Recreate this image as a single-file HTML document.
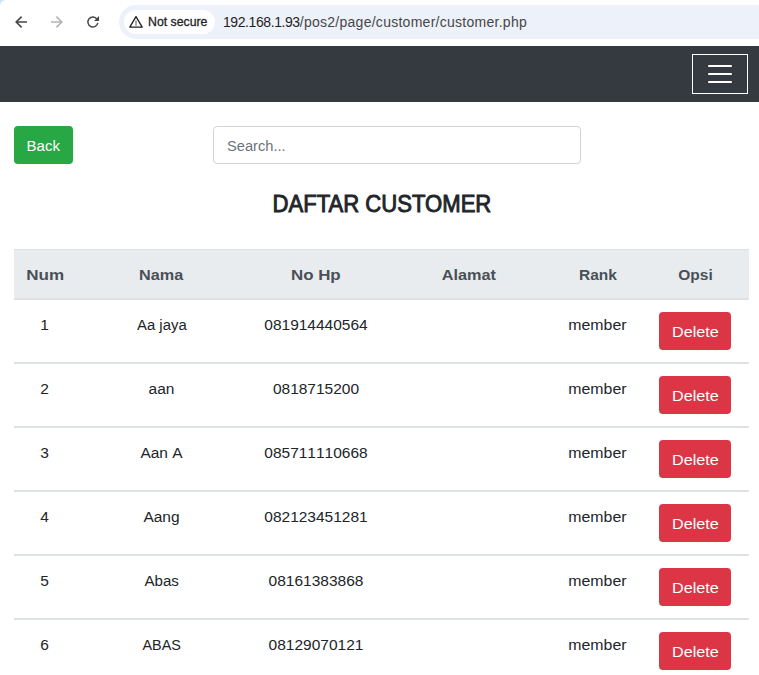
<!DOCTYPE html>
<html lang="id">
<head>
<meta charset="utf-8">
<title>Daftar Customer</title>
<style>
*{box-sizing:border-box;margin:0;padding:0}
html,body{width:759px;height:675px;overflow:hidden;background:#fff}
body{font-family:"Liberation Sans",Arial,sans-serif;color:#212529;font-size:16px;position:relative}
.abs{position:absolute}
/* browser chrome */
#chrome{left:0;top:0;width:759px;height:46px;background:#fff}
#corner{left:0;top:0;width:5px;height:5px;background:radial-gradient(circle at 5px 5px,#fff 4.2px,#cfe0fc 5.2px)}
#omni{left:119px;top:5px;width:660px;height:34px;border-radius:17px;background:#edf1fa}
#chip{left:124px;top:10px;width:91px;height:24px;border-radius:12px;background:#fff}
#chiptxt{left:148px;top:10px;height:24px;line-height:24px;font-size:12.3px;font-weight:400;-webkit-text-stroke:0.3px #1f1f1f;color:#1f1f1f;white-space:nowrap;letter-spacing:0}
#url{left:223px;top:5px;height:34px;line-height:34px;font-size:14px;color:#1f1f1f;white-space:nowrap}
#url b{font-weight:400;letter-spacing:-0.42px;font-kerning:none}
#url span{color:#474747;letter-spacing:0.27px}
/* navbar */
#nav{left:0;top:46px;width:759px;height:56px;background:#343a40}
#tog{left:692px;top:54px;width:56px;height:40px;border:1px solid #fff;border-radius:0}
#tog i{position:absolute;left:15px;width:24px;height:2px;background:#fff;border-radius:1px}
/* controls */
#back{left:14px;top:126px;width:59px;height:38px;border-radius:4px;background:#28a745;color:#fff;text-align:center;line-height:40px;font-size:15.5px}
#search{left:213px;top:126px;width:368px;height:38px;border:1px solid #ced4da;border-radius:4px;background:#fff;color:#6c757d;line-height:38px;padding-left:13px;font-size:15.5px}
#h{left:0;top:187px;width:763px;text-align:center;font-size:23px;font-weight:400;-webkit-text-stroke:0.9px #212529;line-height:34px;color:#212529;white-space:nowrap}
/* table */
table{position:absolute;left:14px;top:249px;width:735px;border-collapse:separate;border-spacing:0;table-layout:fixed}
th,td{text-align:center;vertical-align:top;padding:13px 0 11px;line-height:24px;font-size:15.5px;white-space:nowrap}
td.o{padding:12px 0}
.s{display:inline-block;transform-origin:50% 50%}
td{font-kerning:none}
thead th{background:#e9ecef;color:#495057;font-weight:700;border-top:1px solid #dee2e6;border-bottom:2px solid #dee2e6;height:51px}
tbody td{border-bottom:2px solid #dee2e6;height:64px}
.del{display:inline-block;width:72px;height:38px;line-height:40px;border-radius:4px;background:#dc3545;color:#fff;font-size:15.5px;vertical-align:top}
</style>
</head>
<body>
<div id="chrome" class="abs"></div>
<div id="corner" class="abs"></div>
<svg class="abs" style="left:0;top:0" width="110" height="46" viewBox="0 0 110 46" fill="none" stroke-linecap="butt" stroke-linejoin="miter">
  <g stroke="#474747" stroke-width="1.6">
    <path d="M27 22H16.2M21.6 16.6L16.2 22l5.4 5.4"/>
  </g>
  <g stroke="#b4b4b4" stroke-width="1.6">
    <path d="M51 22h10.8M56.4 16.6l5.4 5.4-5.4 5.4"/>
  </g>
  <g stroke="#474747" stroke-width="1.6">
    <path d="M97.0 19.1A5 5 0 1 0 97.85 22.9" stroke-width="1.45"/>
    <path d="M99 15.9V20.9H94Z" fill="#474747" stroke="none"/>
  </g>
</svg>
<div id="omni" class="abs"></div>
<div id="chip" class="abs"></div>
<svg class="abs" style="left:128px;top:14px" width="16" height="16" viewBox="0 0 16 16" fill="none">
  <path d="M8 2.6L14.2 13.2H1.8Z" stroke="#1f1f1f" stroke-width="1.3" stroke-linejoin="round"/>
  <path d="M8 6.4v5.4" stroke="#6a6a6a" stroke-width="1.1"/>
</svg>
<div id="chiptxt" class="abs">Not secure</div>
<div id="url" class="abs"><b>192.168.1.93</b><span>/pos2/page/customer/customer.php</span></div>

<div id="nav" class="abs"></div>
<div id="tog" class="abs"><i style="top:10px"></i><i style="top:18px"></i><i style="top:26px"></i></div>

<div id="back" class="abs"><span class="s" style="transform:scaleX(0.966)">Back</span></div>
<div id="search" class="abs"><span class="s" style="transform:scaleX(0.946);transform-origin:0 50%">Search...</span></div>
<div id="h" class="abs"><span class="s" style="transform:scaleX(.96)">DAFTAR CUSTOMER</span></div>

<table>
<colgroup><col style="width:61px"><col style="width:173px"><col style="width:136px"><col style="width:170px"><col style="width:86px"><col style="width:109px"></colgroup>
<thead><tr><th><span class="s" style="transform:scaleX(1.100);position:relative;left:1px">Num</span></th><th><span class="s" style="transform:scaleX(1.047)">Nama</span></th><th><span class="s" style="transform:scaleX(1.090)">No Hp</span></th><th><span class="s" style="transform:scaleX(1.050)">Alamat</span></th><th><span class="s" style="transform:scaleX(1.000);position:relative;left:1px">Rank</span></th><th><span class="s" style="transform:scaleX(1.000);position:relative;left:1px">Opsi</span></th></tr></thead>
<tbody>
<tr><td><span class="s" style="transform:scaleX(1.000)">1</span></td><td><span class="s" style="transform:scaleX(0.960)">Aa jaya</span></td><td><span class="s" style="transform:scaleX(1.000)">081914440564</span></td><td></td><td><span class="s" style="transform:scaleX(1.023)">member</span></td><td class="o"><span class="del"><span class="s" style="transform:scaleX(1.045);position:relative;left:1px">Delete</span></span></td></tr>
<tr><td><span class="s" style="transform:scaleX(1.000)">2</span></td><td><span class="s" style="transform:scaleX(1.000)">aan</span></td><td><span class="s" style="transform:scaleX(1.000)">0818715200</span></td><td></td><td><span class="s" style="transform:scaleX(1.023)">member</span></td><td class="o"><span class="del"><span class="s" style="transform:scaleX(1.045);position:relative;left:1px">Delete</span></span></td></tr>
<tr><td><span class="s" style="transform:scaleX(1.000)">3</span></td><td><span class="s" style="transform:scaleX(1.000)">Aan A</span></td><td><span class="s" style="transform:scaleX(1.000)">085711110668</span></td><td></td><td><span class="s" style="transform:scaleX(1.023)">member</span></td><td class="o"><span class="del"><span class="s" style="transform:scaleX(1.045);position:relative;left:1px">Delete</span></span></td></tr>
<tr><td><span class="s" style="transform:scaleX(1.000)">4</span></td><td><span class="s" style="transform:scaleX(1.000)">Aang</span></td><td><span class="s" style="transform:scaleX(1.000)">082123451281</span></td><td></td><td><span class="s" style="transform:scaleX(1.023)">member</span></td><td class="o"><span class="del"><span class="s" style="transform:scaleX(1.045);position:relative;left:1px">Delete</span></span></td></tr>
<tr><td><span class="s" style="transform:scaleX(1.000)">5</span></td><td><span class="s" style="transform:scaleX(0.975)">Abas</span></td><td><span class="s" style="transform:scaleX(1.000)">08161383868</span></td><td></td><td><span class="s" style="transform:scaleX(1.023)">member</span></td><td class="o"><span class="del"><span class="s" style="transform:scaleX(1.045);position:relative;left:1px">Delete</span></span></td></tr>
<tr><td><span class="s" style="transform:scaleX(1.000)">6</span></td><td><span class="s" style="transform:scaleX(0.930)">ABAS</span></td><td><span class="s" style="transform:scaleX(1.000)">08129070121</span></td><td></td><td><span class="s" style="transform:scaleX(1.023)">member</span></td><td class="o"><span class="del"><span class="s" style="transform:scaleX(1.045);position:relative;left:1px">Delete</span></span></td></tr>
</tbody>
</table>
</body>
</html>
